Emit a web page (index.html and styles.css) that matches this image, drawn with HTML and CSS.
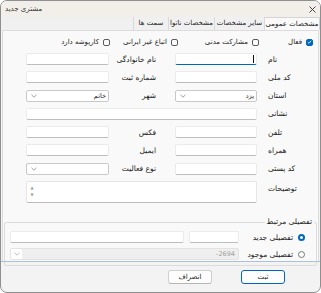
FILE: index.html
```html
<!DOCTYPE html>
<html lang="fa">
<head>
  <meta charset="utf-8">
  <title>مشتری جدید</title>
  <link rel="stylesheet" href="styles.css">
</head>
<body>
<div class="window">
  <div class="titlebar">
    <span class="title" dir="rtl">مشتری جدید</span>
    <svg class="close" width="7" height="7" viewBox="0 0 7 7"><path d="M0.5 0.5L6.5 6.5M6.5 0.5L0.5 6.5" stroke="#333" stroke-width="0.9"/></svg>
  </div>

  <div class="tabs" dir="rtl">
    <div class="tab tab-active">مشخصات عمومی</div>
    <div class="tab tab-2">سایر مشخصات</div>
    <div class="tab tab-3">مشخصات ناتوا</div>
    <div class="tab tab-4">سمت ها</div>
  </div>

  <div class="page">
    <div class="checks" dir="rtl">
      <div class="check check-1">
        <span class="box box-on"><svg width="6" height="6" viewBox="0 0 6 6"><path d="M1 3.2L2.4 4.5L5 1.5" fill="none" stroke="#fff" stroke-width="1"/></svg></span>
        <span>فعال</span>
      </div>
      <div class="check check-2"><span class="box"></span><span>مشارکت مدنی</span></div>
      <div class="check check-3"><span class="box"></span><span>اتباع غیر ایرانی</span></div>
      <div class="check"><span class="box"></span><span>کارپوشه دارد</span></div>
    </div>

    <!-- form grid: left input, left label, right input, right label -->
    <div class="form">
      <div class="field"></div>
      <div class="lbl lbl-l" dir="rtl">نام خانوادگی</div>
      <div class="field field-focus"><span class="caret"></span></div>
      <div class="lbl lbl-r" dir="rtl">نام</div>

      <div class="field"></div>
      <div class="lbl lbl-l" dir="rtl">شماره ثبت</div>
      <div class="field"></div>
      <div class="lbl lbl-r" dir="rtl">کد ملی</div>

      <div class="combo" dir="rtl"><span>خاتم</span><svg width="6" height="4" viewBox="0 0 6 4"><path d="M0.5 0.8L3 3.2L5.5 0.8" fill="none" stroke="#888" stroke-width="0.8"/></svg></div>
      <div class="lbl lbl-l" dir="rtl">شهر</div>
      <div class="combo" dir="rtl"><span>یزد</span><svg width="6" height="4" viewBox="0 0 6 4"><path d="M0.5 0.8L3 3.2L5.5 0.8" fill="none" stroke="#888" stroke-width="0.8"/></svg></div>
      <div class="lbl lbl-r" dir="rtl">استان</div>

      <div class="field span-3"></div>
      <div class="lbl lbl-r" dir="rtl">نشانی</div>

      <div class="field"></div>
      <div class="lbl lbl-l" dir="rtl">فکس</div>
      <div class="field"></div>
      <div class="lbl lbl-r" dir="rtl">تلفن</div>

      <div class="field"></div>
      <div class="lbl lbl-l" dir="rtl">ایمیل</div>
      <div class="field"></div>
      <div class="lbl lbl-r" dir="rtl">همراه</div>

      <div class="combo" dir="rtl"><span></span><svg width="6" height="4" viewBox="0 0 6 4"><path d="M0.5 0.8L3 3.2L5.5 0.8" fill="none" stroke="#888" stroke-width="0.8"/></svg></div>
      <div class="lbl lbl-l" dir="rtl">نوع فعالیت</div>
      <div class="field"></div>
      <div class="lbl lbl-r" dir="rtl">کد پستی</div>

      <div class="memo span-3">
        <div class="memo-scroll"><span>▲</span><span>▼</span></div>
      </div>
      <div class="lbl lbl-r lbl-top" dir="rtl">توضیحات</div>
    </div>

    <fieldset class="group" dir="rtl">
      <legend>تفصیلی مرتبط</legend>
      <div class="group-row">
        <div class="radio-item"><span class="radio radio-on"></span><span>تفصیلی جدید</span></div>
        <div class="group-controls" dir="ltr">
          <div class="field field-wide"></div>
          <div class="field field-code"></div>
        </div>
      </div>
      <div class="group-row">
        <div class="radio-item"><span class="radio"></span><span>تفصیلی موجود</span></div>
        <div class="combo combo-off" dir="rtl"><span>2694-</span><i class="combo-btn"><svg width="6" height="4" viewBox="0 0 6 4"><path d="M0.5 0.8L3 3.2L5.5 0.8" fill="none" stroke="#aaa" stroke-width="0.8"/></svg></i></div>
      </div>
    </fieldset>
  </div>

  <div class="footer" dir="rtl">
    <button class="btn btn-primary" type="button">ثبت</button>
    <button class="btn" type="button">انصراف</button>
  </div>
</div>
</body>
</html>
```

FILE: styles.css
```css
body {
    margin: 0;
    background: #fff;
    font-family: "DejaVu Sans", sans-serif;
    font-size: 7px;
    color: #1b1b1b;
}

.window {
    width: 321px;
    height: 293px;
    box-sizing: border-box;
    border: 1px solid #8f8f8f;
    border-radius: 7px;
    overflow: hidden;
    background: #f3f3f3;
    display: flex;
    flex-direction: column;
}

/* title bar */
.titlebar {
    height: 16px;
    flex: none;
    background: #f2efea;
    display: flex;
    align-items: center;
    justify-content: space-between;
    padding: 0 4px 0 4px;
}

.title {
    font-size: 7px;
    color: #333;
}

/* tab strip */
.tabs {
    height: 13px;
    flex: none;
    display: flex;
    background: #f0f0f0;
}

.tab {
    box-sizing: border-box;
    height: 13px;
    line-height: 12px;
    text-align: center;
    border-left: 1px solid #dadada;
    color: #222;
    white-space: nowrap;
}

.tab-active {
    width: 56px;
    background: #f9f9f9;
    border-top: 1px solid #d4d4d4;
    border-right: 1px solid #d4d4d4;
}

.tab-2 { width: 50px; }
.tab-3 { width: 46px; }
.tab-4 { width: 35px; }

/* page */
.page {
    height: 231px;
    flex: none;
    box-sizing: border-box;
    margin: 0 1px;
    background: #f9f9f9;
    border: 1px solid #dcdcdc;
    border-bottom: none;
}

.checks {
    display: flex;
    height: 12px;
    margin-top: 5px;
    padding-right: 5px;
    align-items: center;
}

.check {
    display: flex;
    align-items: center;
    gap: 4px;
}

.check-1 { width: 54px; }
.check-2 { width: 81px; }
.check-3 { width: 68px; }

.box {
    width: 7px;
    height: 7px;
    box-sizing: border-box;
    border: 1px solid #5c5c5c;
    border-radius: 2px;
    background: #fff;
    display: flex;
    align-items: center;
    justify-content: center;
}

.box-on {
    border-color: #0067c0;
    background: #0067c0;
}

/* form grid */
.form {
    display: grid;
    grid-template-columns: 83px 66px 82px 1fr;
    grid-auto-rows: 12px;
    row-gap: 6.3px;
    margin-top: 5px;
    padding-left: 23px;
}

.field {
    box-sizing: border-box;
    background: #fff;
    border: 1px solid #ebebeb;
    border-bottom-color: #bdbdbd;
    border-radius: 2px;
    position: relative;
}

.field-focus {
    border-bottom: 1px solid #0067c0;
}

.caret {
    position: absolute;
    right: 2px;
    top: 1px;
    width: 1px;
    height: 8px;
    background: #111;
}

.span-3 {
    grid-column: span 3;
}

.lbl {
    align-self: center;
    white-space: nowrap;
    font-size: 7.5px;
}

.lbl-l {
    text-align: right;
    padding-right: 19px;
}

.lbl-r {
    text-align: left;
    padding-left: 11px;
}

.lbl-top {
    align-self: start;
    padding-top: 3px;
}

.combo {
    box-sizing: border-box;
    background: #fff;
    border: 1px solid #c9c9c9;
    border-radius: 2px;
    display: flex;
    align-items: center;
    justify-content: space-between;
    padding: 0 2px 0 4px;
    font-size: 6.5px;
}

.memo {
    grid-row: span 2;
    height: 22px;
    box-sizing: border-box;
    background: #fff;
    border: 1px solid #e6e6e6;
    border-bottom-color: #bdbdbd;
    border-radius: 2px;
}

.memo-scroll {
    width: 8px;
    display: flex;
    flex-direction: column;
    align-items: center;
    font-size: 4px;
    color: #9a9a9a;
    line-height: 7px;
    padding-top: 2px;
    margin-left: 1px;
}

/* related account group */
.group {
    margin: 6px 1px 0 1px;
    padding: 0 0 5px 0;
    border: 1px solid #dcdcdc;
    border-radius: 2px;
    min-width: 0;
}

.group legend {
    padding: 0 2px;
    margin-right: 2px;
    line-height: 10px;
    font-size: 7.5px;
}

.group-row {
    display: flex;
    height: 12px;
    align-items: center;
    margin-top: 4px;
}

.group-row + .group-row {
    margin-top: 5px;
}

.radio-item {
    width: 77px;
    box-sizing: border-box;
    padding-right: 11px;
    display: flex;
    align-items: center;
    gap: 5px;
    font-size: 7.5px;
}

.radio {
    width: 7px;
    height: 7px;
    box-sizing: border-box;
    border: 1px solid #7a7a7a;
    border-radius: 50%;
    background: #fff;
}

.radio-on {
    border: 2px solid #0067c0;
    background: #fff;
}

.group-controls {
    display: flex;
    gap: 5px;
    width: 229px;
    height: 12px;
}

.field-wide { width: 174px; }
.field-code { width: 50px; }

.combo-off {
    width: 229px;
    height: 12px;
    background: #efefef;
    border-color: #e2e2e2;
    color: #a0a0a0;
    padding: 0 3px 0 0;
}

.combo-btn {
    width: 11px;
    height: 10px;
    background: #fff;
    display: flex;
    align-items: center;
    justify-content: center;
}

/* footer buttons */
.footer {
    flex: 1;
    border-top: 1px solid #a9c1da;
    display: flex;
    align-items: center;
    gap: 29px;
    padding-right: 35px;
}

.btn {
    width: 44px;
    height: 14px;
    padding: 0;
    font-family: "DejaVu Sans", sans-serif;
    font-size: 7px;
    color: #1b1b1b;
    background: #fdfdfd;
    border: 1px solid #cfcfcf;
    border-bottom-color: #b5b5b5;
    border-radius: 3px;
}

.btn-primary {
    border: 1px solid #0067c0;
}
```
